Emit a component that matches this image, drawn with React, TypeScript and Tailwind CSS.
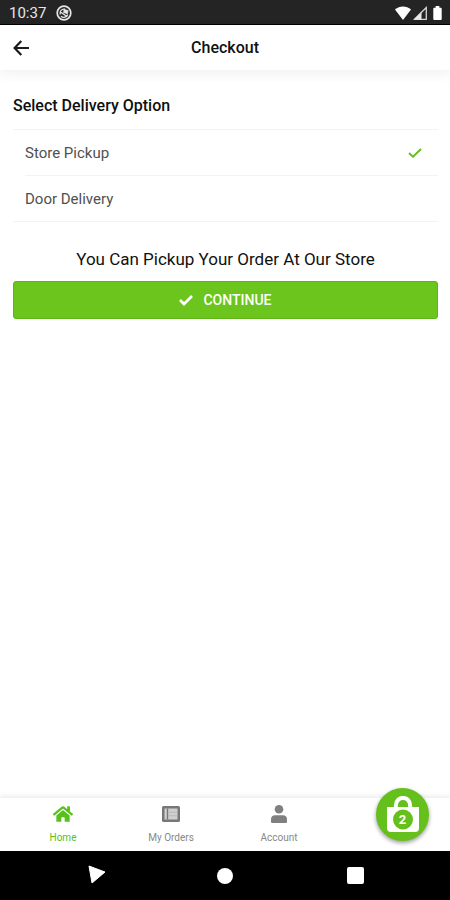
import { useState } from "react";
import { FaHome } from "react-icons/fa";

type Option = { id: string; label: string };

const options: Option[] = [
  { id: "pickup", label: "Store Pickup" },
  { id: "door", label: "Door Delivery" },
];

function StatusBar() {
  return (
    <div className="flex h-[25px] shrink-0 items-center justify-between border-b border-black bg-[#242424] pt-px pr-2 pl-[9px] text-[#e6e6e6]">
      <div className="flex items-center gap-[10px]">
        <span className="text-[15px] leading-5">10:37</span>
        <svg className="size-4" viewBox="0 0 16 16" fill="none" stroke="currentColor" aria-hidden="true">
          <circle cx="8" cy="8" r="6.8" strokeWidth="1.7" />
          <path d="M4.3 9.5A4 4 0 0 1 9 4.2M5 11.2a4.2 4.2 0 0 0 6.8-1.7M3.8 6.5l7.5 5.2" strokeWidth="1.3" />
          <path d="M8 4.2l4.2 1.4-.7 3.3-4-1.3z" fill="currentColor" strokeWidth=".6" />
        </svg>
      </div>
      <div className="flex items-center text-white">
        <svg className="h-[14px] w-4" viewBox="0 0 16 14" fill="currentColor" aria-hidden="true">
          <path d="M0 3.6C4.6-.7 11.4-.7 16 3.6L8 14z" />
        </svg>
        <svg className="ml-[2px] size-[14px]" viewBox="0 0 14 14" aria-hidden="true">
          <path d="M1.5 13.3L13.3 1.5V13.3z" fill="none" stroke="#d4d4d4" strokeWidth="1.3" />
          <path d="M1 13.5L8.5 6V13.5z" fill="#e8e8e8" />
        </svg>
        <svg className="ml-[6px] h-[14px] w-[9px]" viewBox="0 0 9 15" fill="currentColor" aria-hidden="true">
          <path d="M2.5 0h4v2H8a1 1 0 0 1 1 1v11a1 1 0 0 1-1 1H1a1 1 0 0 1-1-1V3a1 1 0 0 1 1-1h1.5z" />
        </svg>
      </div>
    </div>
  );
}

function Header() {
  return (
    <header className="grid h-[45px] shrink-0 grid-cols-[1fr_auto_1fr] items-center px-3 shadow-[0_4px_12px_rgba(0,0,0,0.06)]">
      <button type="button" aria-label="Back" className="w-fit">
        <svg className="size-[18px]" viewBox="0 0 18 18" fill="none" stroke="#1c1c1c" strokeWidth="2.2" aria-hidden="true">
          <path d="M9.3 2L2.6 9l6.7 7M2.6 9H17" />
        </svg>
      </button>
      <h1 className="text-base leading-5 font-medium text-[#101010]">Checkout</h1>
    </header>
  );
}

function BagIcon() {
  return (
    <svg className="h-9 w-8" viewBox="0 0 32 36" fill="none" aria-hidden="true">
      <path d="M0 11H32V32a4 4 0 0 1-4 4H4a4 4 0 0 1-4-4z" fill="white" />
      <path d="M8.9 13V9a7.1 7.1 0 0 1 14.2 0V13" stroke="white" strokeWidth="4" />
      <path d="M10.9 13V10.5a5.1 5.1 0 0 1 10.2 0V13z" fill="#65c01b" />
      <path d="M8 11H24V15H8z" fill="white" />
      <circle cx="16" cy="23.5" r="10" fill="#65c01b" />
    </svg>
  );
}

function TabBar() {
  return (
    <nav className="relative h-[53px] shrink-0 bg-white px-[9px] shadow-[0_-2px_5px_rgba(0,0,0,0.08)]">
      <div className="grid h-full grid-cols-4 text-[10px] leading-3 text-[#888888]">
        <button type="button" aria-current="page" className="flex flex-col items-center pt-1.5 text-[#58c01b]">
          <FaHome className="size-5" aria-hidden="true" />
          <span className="mt-2">Home</span>
        </button>
        <button type="button" className="flex flex-col items-center pt-1.5">
          <svg className="size-5" viewBox="0 0 20 20" aria-hidden="true">
            <rect x="1" y="2" width="18" height="16" rx="1.5" fill="#777777" />
            <path d="M3.5 4.5h13v11h-13z" fill="#d0d0d0" />
            <path d="M6.5 4.5v11" stroke="#777777" strokeWidth="1.4" />
            <path d="M7 8.2h9.5M7 11.8h9.5" stroke="#b8b8b8" />
          </svg>
          <span className="mt-2">My Orders</span>
        </button>
        <button type="button" className="flex flex-col items-center pt-1.5">
          <svg className="size-5" viewBox="0 0 20 20" fill="#808080" aria-hidden="true">
            <circle cx="10" cy="5.2" r="4.3" />
            <path d="M2 18v-2.8C2 12.6 3.7 11.2 6 11.2h8c2.3 0 4 1.4 4 4V18a1 1 0 0 1-1 1H3a1 1 0 0 1-1-1z" />
          </svg>
          <span className="mt-2">Account</span>
        </button>
      </div>
      <button
        type="button"
        aria-label="Cart, 2 items"
        className="absolute -top-[10px] right-[21px] flex size-[53px] items-center justify-center rounded-full bg-[#65c01b] pb-px shadow-[0_2px_4px_rgba(0,0,0,0.4)]"
      >
        <BagIcon />
        <span className="absolute inset-x-0 top-6 text-center text-[13px] leading-4 font-bold text-white">2</span>
      </button>
    </nav>
  );
}

function SystemBar() {
  return (
    <div className="grid h-[49px] shrink-0 grid-cols-3 items-center bg-black px-[30px]">
      <button type="button" aria-label="Back" className="flex justify-center">
        <svg className="size-[22px]" viewBox="0 0 22 22" fill="white" aria-hidden="true">
          <path d="M5 1L21 7 8 18z" stroke="white" strokeLinejoin="round" />
        </svg>
      </button>
      <button type="button" aria-label="Home" className="mx-auto size-4 rounded-full bg-white" />
      <button type="button" aria-label="Recent apps" className="mx-auto size-[17px] rounded-xs bg-white" />
    </div>
  );
}

export default function App() {
  const [selected, setSelected] = useState("pickup");
  return (
    <div className="flex min-h-screen flex-col bg-white font-['Roboto',sans-serif]">
      <StatusBar />
      <Header />
      <main className="flex-1 pt-[26px] pr-3 pl-[13px]">
        <fieldset>
          <legend className="text-base leading-5 font-medium text-[#101010]">Select Delivery Option</legend>
          <div className="mt-[13px] border-y border-[#f3f3f3]">
            {options.map((option, index) => (
              <label
                key={option.id}
                className={
                  index === 0
                    ? "ml-3 flex h-[46px] items-center justify-between border-b border-[#f3f3f3] pr-4 text-[15px] leading-5 text-[#505050]"
                    : "ml-3 flex h-[45px] items-center justify-between pr-4 text-[15px] leading-5 text-[#505050]"
                }
              >
                <input
                  type="radio"
                  name="delivery"
                  value={option.id}
                  checked={selected === option.id}
                  onChange={() => setSelected(option.id)}
                  className="sr-only"
                />
                <span>{option.label}</span>
                {selected === option.id && (
                  <svg className="h-[10px] w-[14px]" viewBox="0 0 14 10" fill="none" stroke="#65c01b" strokeWidth="2" aria-hidden="true">
                    <path d="M1 5l4 3.7L13 1" />
                  </svg>
                )}
              </label>
            ))}
          </div>
        </fieldset>
        <p className="mt-[27px] text-center text-[17px] leading-5 text-[#101010]">
          You Can Pickup Your Order At Our Store
        </p>
        <button
          type="button"
          className="mt-3 flex h-[38px] w-full items-center justify-center gap-[10px] rounded-[3px] border border-[#5db515] bg-[#6cc51d] text-sm leading-5 font-medium text-white"
        >
          <svg className="h-[11px] w-[14px]" viewBox="0 0 14 11" fill="none" stroke="currentColor" strokeWidth="2.8" aria-hidden="true">
            <path d="M1 5l4 4L13 1" />
          </svg>
          CONTINUE
        </button>
      </main>
      <TabBar />
      <SystemBar />
    </div>
  );
}
